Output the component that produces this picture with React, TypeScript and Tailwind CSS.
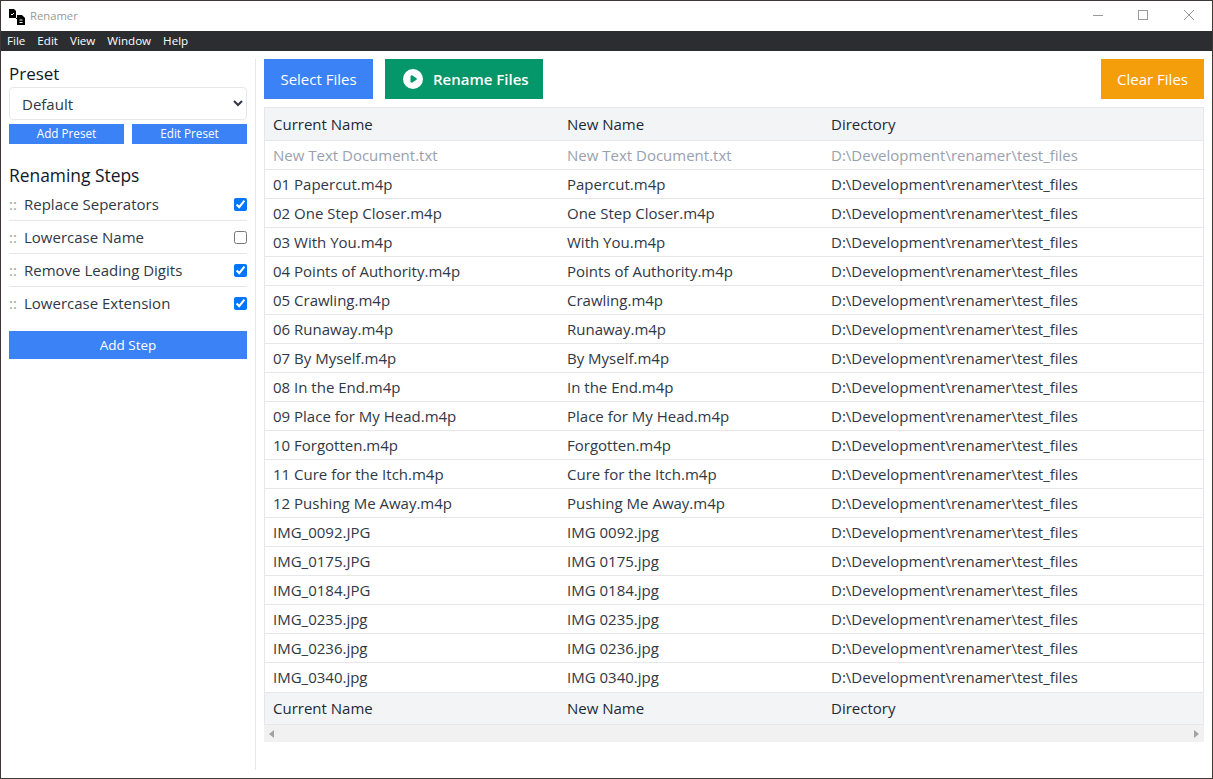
const songs = [
  ["01 Papercut.m4p", "Papercut.m4p"],
  ["02 One Step Closer.m4p", "One Step Closer.m4p"],
  ["03 With You.m4p", "With You.m4p"],
  ["04 Points of Authority.m4p", "Points of Authority.m4p"],
  ["05 Crawling.m4p", "Crawling.m4p"],
  ["06 Runaway.m4p", "Runaway.m4p"],
  ["07 By Myself.m4p", "By Myself.m4p"],
  ["08 In the End.m4p", "In the End.m4p"],
  ["09 Place for My Head.m4p", "Place for My Head.m4p"],
  ["10 Forgotten.m4p", "Forgotten.m4p"],
  ["11 Cure for the Itch.m4p", "Cure for the Itch.m4p"],
  ["12 Pushing Me Away.m4p", "Pushing Me Away.m4p"],
  ["IMG_0092.JPG", "IMG 0092.jpg"],
  ["IMG_0175.JPG", "IMG 0175.jpg"],
  ["IMG_0184.JPG", "IMG 0184.jpg"],
  ["IMG_0235.jpg", "IMG 0235.jpg"],
  ["IMG_0236.jpg", "IMG 0236.jpg"],
  ["IMG_0340.jpg", "IMG 0340.jpg"],
];

const steps = [
  { name: "Replace Seperators", on: true },
  { name: "Lowercase Name", on: false },
  { name: "Remove Leading Digits", on: true },
  { name: "Lowercase Extension", on: true },
];

const DIR = "D:\\Development\\renamer\\test_files";

function HeadRow({ className }: { className: string }) {
  return (
    <div className={"flex h-[33px] items-center bg-gray-100 text-[#1f2937] " + className}>
      <div className="w-[294px] pl-2">Current Name</div>
      <div className="w-[264px] pl-2">New Name</div>
      <div className="pl-2">Directory</div>
    </div>
  );
}

export default function App() {
  return (
    <div className="flex h-[779px] flex-col overflow-hidden border border-[#3d3835] bg-white font-['Open_Sans',sans-serif] text-[15px] text-[#303846]">
      {/* Title bar */}
      <div className="flex h-[30px] shrink-0 items-center justify-between">
        <div className="flex items-center pl-[8px]">
          <svg width="16" height="16" viewBox="0 0 16 16" className="mr-[5px] mt-[1px]">
            <path d="M0 0h5l2 2v7H0z" fill="#000" />
            <path d="M9 6h4l3 3v7H8V6z" fill="#000" />
            <path d="M6 8l3 3" stroke="#000" strokeWidth="1" />
            <path d="M2 5l1 1l2-2M10.5 11h3M10.5 13.5h3" stroke="#fff" strokeWidth="1" fill="none" />
          </svg>
          <span className="text-[11.25px] text-[#9a9a9a]">Renamer</span>
        </div>
        <div className="flex items-center">
          <svg width="138" height="30" viewBox="0 0 138 30" fill="none" stroke="#9a9a9a">
            <path d="M19 14.5h10" />
            <rect x="64.5" y="9.5" width="9" height="9" />
            <path d="M110 9l10 10M120 9l-10 10" />
          </svg>
        </div>
      </div>

      {/* Menu bar */}
      <div className="flex h-[20px] shrink-0 items-center gap-[12px] bg-[#2b2d31] pl-[6px] text-[11.6px] text-white">
        <span>File</span>
        <span>Edit</span>
        <span>View</span>
        <span>Window</span>
        <span>Help</span>
      </div>

      <div className="flex min-h-0 flex-1">
        {/* Sidebar */}
        <aside className="mt-[8px] mb-[8px] w-[255px] shrink-0 border-r border-gray-200 pr-[8px] pl-[8px]">
          <h2 className="h-[28px] text-[17px] leading-[30px] font-medium text-[#111827]">Preset</h2>
          <select className="h-[33px] w-full rounded border border-gray-200 bg-white pl-[8px] text-[15px] text-[#303846]">
            <option>Default</option>
          </select>
          <div className="mt-[4px] flex justify-between">
            <button className="h-[20px] w-[115px] bg-[#3b82f6] text-[11.7px] font-medium text-white">Add Preset</button>
            <button className="h-[20px] w-[115px] bg-[#3b82f6] text-[11.7px] font-medium text-white">Edit Preset</button>
          </div>
          <h2 className="mt-[16px] h-[28px] text-[17.4px] leading-[30px] font-medium text-[#111827]">Renaming Steps</h2>
          <ul>
            {steps.map((s, i) => (
              <li key={s.name} className={"flex h-[33px] items-center justify-between " + (i < 3 ? "border-b border-gray-200" : "")}>
                <span className="flex items-center">
                  <span className="w-[15px] text-[15px] text-gray-400">::</span>
                  <span>{s.name}</span>
                </span>
                <input type="checkbox" defaultChecked={s.on} />
              </li>
            ))}
          </ul>
          <button className="mt-[11px] h-[28px] w-full bg-[#3b82f6] text-[13.5px] font-medium text-white">Add Step</button>
        </aside>

        {/* Main */}
        <main className="min-w-0 flex-1 pt-[8px] pr-[8px] pl-[8px]">
          <div className="flex justify-between">
            <div className="flex gap-[12px]">
              <button className="h-[40px] w-[109px] bg-[#3b82f6] text-white">Select Files</button>
              <button className="flex h-[40px] w-[158px] items-center gap-[10px] bg-[#059669] pl-[18px] font-semibold text-white">
                <svg width="20" height="20" viewBox="2 2 16 16">
                  <path fillRule="evenodd" clipRule="evenodd" d="M10 18a8 8 0 100-16 8 8 0 000 16zM9.555 7.168A1 1 0 008 8v4a1 1 0 001.555.832l3-2a1 1 0 000-1.664l-3-2z" fill="#fff" />
                </svg>
                Rename Files
              </button>
            </div>
            <button className="h-[40px] w-[103px] bg-[#f59e0b] text-white">Clear Files</button>
          </div>

          <div className="mt-[8px] border-x border-t border-gray-200">
            <HeadRow className="border-b border-gray-200" />
            <div className="flex h-[29px] items-center border-b border-gray-200 text-gray-400">
              <div className="w-[294px] pl-2">New Text Document.txt</div>
              <div className="w-[264px] pl-2">New Text Document.txt</div>
              <div className="pl-2">{DIR}</div>
            </div>
            {songs.map(([cur, next], i) => (
              <div key={cur} className={"flex h-[29px] items-center " + (i < songs.length - 1 ? "border-b border-gray-200" : "")}>
                <div className="w-[294px] pl-2">{cur}</div>
                <div className="w-[264px] pl-2">{next}</div>
                <div className="pl-2">{DIR}</div>
              </div>
            ))}
            <HeadRow className="border-y border-gray-200" />
          </div>
          <div className="flex h-[17px] items-center justify-between bg-[#f1f1f1] px-[5px]">
            <svg width="5" height="8" viewBox="0 0 5 8"><path d="M5 0v8L0 4z" fill="#a3a3a3" /></svg>
            <svg width="5" height="8" viewBox="0 0 5 8"><path d="M0 0v8l5-4z" fill="#a3a3a3" /></svg>
          </div>
        </main>
      </div>
    </div>
  );
}
